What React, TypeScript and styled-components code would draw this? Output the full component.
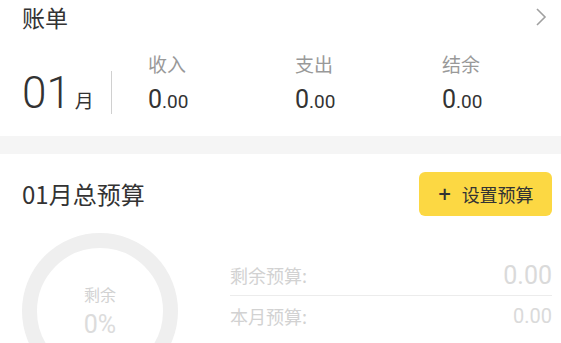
import React from 'react'
import styled, { createGlobalStyle } from 'styled-components'

const GlobalStyle = createGlobalStyle`
	html, body {
		margin: 0;
		padding: 0;
		background: #fff;
		font-family: Roboto, "Noto Sans CJK SC", sans-serif;
		color: #333;
	}
`

const Page = styled.div`
	width: 561px;
	height: 343px;
	overflow: hidden;
	background: #fff;
`

const BillCard = styled.section`
	padding: 0 0 0 22px;
	height: 136px;
	box-sizing: border-box;
	overflow: hidden;
`

const HeaderRow = styled.div`
	display: flex;
	align-items: center;
	justify-content: space-between;
	height: 34px;
	padding-right: 14px;
`

const Title = styled.h2`
	margin: 0;
	font-family: "Noto Sans CJK SC", sans-serif;
	font-size: 23px;
	font-weight: 400;
	color: #333;
	line-height: 1;
`

const Summary = styled.div`
	display: flex;
	align-items: flex-start;
	margin-top: 18px;
`

const Month = styled.div`
	display: flex;
	align-items: baseline;
	width: 89px;
	flex-shrink: 0;
	margin-top: 19px;
	color: #333;
`

const MonthNum = styled.span`
	font-size: 44px;
	font-weight: 300;
	line-height: 1;
`

const MonthUnit = styled.span`
	font-family: "Noto Sans CJK SC", sans-serif;
	font-size: 19px;
	margin-left: 4px;
`

const Divider = styled.div`
	width: 1px;
	height: 43px;
	flex-shrink: 0;
	margin-top: 19px;
	margin-right: 36px;
	background: #d0d0d0;
`

const Stat = styled.div`
	width: 147px;
	flex-shrink: 0;
	display: flex;
	flex-direction: column;
`

const StatLabel = styled.span`
	font-family: "Noto Sans CJK SC", sans-serif;
	font-size: 19px;
	line-height: 24px;
	color: #999;
`

const StatValue = styled.span`
	margin-top: 10px;
	line-height: 28px;
	color: #333;
	font-size: 19px;
`

const BigDigit = styled.span`
	font-size: 25px;
`

const Band = styled.div`
	height: 18px;
	background: #f5f5f5;
`

const BudgetCard = styled.section`
	padding: 18px 9px 0 22px;
`

const BudgetHead = styled.div`
	display: flex;
	align-items: center;
	justify-content: space-between;
`

const BudgetTitle = styled(Title)`
	font-size: 24px;
`

const AddButton = styled.button`
	width: 133px;
	height: 44px;
	border: none;
	border-radius: 6px;
	background: #fcd843;
	color: #333;
	font-family: "Noto Sans CJK SC", sans-serif;
	font-size: 18px;
	display: flex;
	align-items: center;
	justify-content: center;
	gap: 10px;
	padding: 0;
`

const Plus = styled.span`
	font-family: "DejaVu Sans", sans-serif;
	font-weight: 700;
	font-size: 17px;
`

const BudgetBody = styled.div`
	display: flex;
	margin-top: 17px;
`

const Ring = styled.div`
	width: 156px;
	height: 156px;
	border-radius: 50%;
	border: 15px solid #efefef;
	box-sizing: border-box;
	display: flex;
	flex-direction: column;
	align-items: center;
	justify-content: center;
	flex-shrink: 0;
`

const RingLabel = styled.span`
	font-family: "Noto Sans CJK SC", sans-serif;
	font-size: 16px;
	color: #d2d2d2;
	margin-top: -2px;
`

const RingValue = styled.span`
	font-size: 25px;
	color: #dcdcdc;
	margin-top: 4px;
`

const List = styled.div`
	flex: 1;
	margin-left: 52px;
	margin-top: 22px;
`

const Row = styled.div<{ $line?: boolean }>`
	display: flex;
	align-items: center;
	justify-content: space-between;
	height: 40px;
	border-bottom: ${p => (p.$line ? '1px solid #ececec' : 'none')};
`

const RowLabel = styled.span`
	font-family: "Noto Sans CJK SC", sans-serif;
	font-size: 18px;
	color: #d2d2d2;
`

const RowValue = styled.span<{ $size: number }>`
	font-size: ${p => p.$size}px;
	color: #dadada;
`

const Money = ({ v }: { v: string }) => {
	const [i, d] = v.split('.')
	return (
		<StatValue>
			<BigDigit>{i}</BigDigit>.{d}
		</StatValue>
	)
}

const stats = [
	{ label: '收入', value: '0.00' },
	{ label: '支出', value: '0.00' },
	{ label: '结余', value: '0.00' },
]

const App = () => {
	return (
		<Page>
			<GlobalStyle />
			<BillCard>
				<HeaderRow>
					<Title>账单</Title>
					<svg width="12" height="20" viewBox="0 0 12 20">
						<path d="M2 2 L10 10 L2 18" fill="none" stroke="#a0a0a0" strokeWidth="1.6" />
					</svg>
				</HeaderRow>
				<Summary>
					<Month>
						<MonthNum>01</MonthNum>
						<MonthUnit>月</MonthUnit>
					</Month>
					<Divider />
					{stats.map(s => (
						<Stat key={s.label}>
							<StatLabel>{s.label}</StatLabel>
							<Money v={s.value} />
						</Stat>
					))}
				</Summary>
			</BillCard>
			<Band />
			<BudgetCard>
				<BudgetHead>
					<BudgetTitle>01月总预算</BudgetTitle>
					<AddButton>
						<Plus>+</Plus>
						设置预算
					</AddButton>
				</BudgetHead>
				<BudgetBody>
					<Ring>
						<RingLabel>剩余</RingLabel>
						<RingValue>0%</RingValue>
					</Ring>
					<List>
						<Row $line>
							<RowLabel>剩余预算:</RowLabel>
							<RowValue $size={25}>0.00</RowValue>
						</Row>
						<Row>
							<RowLabel>本月预算:</RowLabel>
							<RowValue $size={20}>0.00</RowValue>
						</Row>
					</List>
				</BudgetBody>
			</BudgetCard>
		</Page>
	)
}

export default App
